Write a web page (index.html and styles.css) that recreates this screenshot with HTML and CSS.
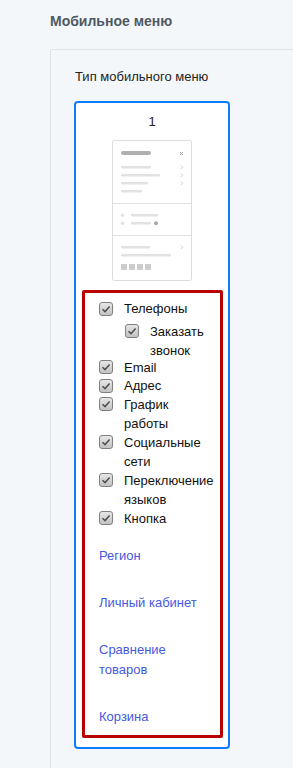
FILE: index.html
```html
<!DOCTYPE html>
<html>
<head>
    <title>Мобильное меню</title>
    <link rel="stylesheet" href="styles.css">
</head>
<body>
    <div class="page">
        <h2 class="section-title">Мобильное меню</h2>

        <div class="card">
            <div class="field-label">Тип мобильного меню</div>

            <div class="variant selected">
                <div class="variant-num">1</div>
                <svg class="preview" width="80" height="141" viewBox="0 0 80 141">
                    <rect x="0.5" y="0.5" width="79" height="140" rx="2" fill="#fff" stroke="#dcdcdc"/>
                    <!-- header -->
                    <rect x="9" y="11" width="30" height="4" rx="2" fill="#b0b0b0"/>
                    <path d="M68 12 L71 15 M71 12 L68 15" stroke="#9a9a9a" stroke-width="1"/>
                    <rect x="9" y="26" width="30" height="2.5" rx="1.2" fill="#e2e2e2"/>
                    <rect x="9" y="34" width="39" height="2.5" rx="1.2" fill="#e2e2e2"/>
                    <rect x="9" y="42" width="27" height="2.5" rx="1.2" fill="#e2e2e2"/>
                    <rect x="9" y="50" width="21" height="2.5" rx="1.2" fill="#e2e2e2"/>
                    <path d="M69 25.5 L70.5 27.2 L69 29 M69 33.5 L70.5 35.2 L69 37 M69 41.5 L70.5 43.2 L69 45" stroke="#cfcfcf" fill="none"/>
                    <line x1="1" y1="63.5" x2="79" y2="63.5" stroke="#e2e2e2"/>
                    <!-- contacts -->
                    <circle cx="10.5" cy="75.3" r="1.7" fill="#e2e2e2"/>
                    <rect x="19" y="74" width="27" height="2.5" rx="1.2" fill="#e2e2e2"/>
                    <circle cx="10.5" cy="83.3" r="1.7" fill="#e2e2e2"/>
                    <rect x="19" y="82" width="20" height="2.5" rx="1.2" fill="#e2e2e2"/>
                    <circle cx="44" cy="83.3" r="2" fill="#a8a8a8"/>
                    <line x1="1" y1="95.5" x2="79" y2="95.5" stroke="#e2e2e2"/>
                    <!-- footer -->
                    <rect x="9" y="106" width="29" height="2.5" rx="1.2" fill="#e2e2e2"/>
                    <path d="M69 105.5 L70.5 107.2 L69 109" stroke="#cfcfcf" fill="none"/>
                    <rect x="9" y="114" width="50" height="2.5" rx="1.2" fill="#e2e2e2"/>
                    <rect x="9" y="124" width="6" height="6" rx="0.5" fill="#cdcdcd"/>
                    <rect x="17" y="124" width="6" height="6" rx="0.5" fill="#cdcdcd"/>
                    <rect x="25" y="124" width="6" height="6" rx="0.5" fill="#cdcdcd"/>
                    <rect x="33" y="124" width="6" height="6" rx="0.5" fill="#cdcdcd"/>
                </svg>

                <div class="options">
                    <ul class="checks">
                        <li>
                            <span class="check"></span><span class="check-text">Телефоны</span>
                        </li>
                        <li class="nested">
                            <span class="check"></span><span class="check-text">Заказать звонок</span>
                        </li>
                        <li>
                            <span class="check"></span><span class="check-text">Email</span>
                        </li>
                        <li>
                            <span class="check"></span><span class="check-text">Адрес</span>
                        </li>
                        <li>
                            <span class="check"></span><span class="check-text">График работы</span>
                        </li>
                        <li>
                            <span class="check"></span><span class="check-text">Социальные сети</span>
                        </li>
                        <li>
                            <span class="check"></span><span class="check-text">Переключение языков</span>
                        </li>
                        <li>
                            <span class="check"></span><span class="check-text">Кнопка</span>
                        </li>
                    </ul>

                    <div class="links">
                        <a href="#">Регион</a>
                        <a href="#">Личный кабинет</a>
                        <a href="#">Сравнение товаров</a>
                        <a href="#">Корзина</a>
                    </div>
                </div>
            </div>
        </div>
    </div>
</body>
</html>
```

FILE: styles.css
```css
html, body {
    margin: 0;
    padding: 0;
    background: #f4f7f9;
}
.page {
    font-family: "Liberation Sans", Arial, sans-serif;
    padding: 13px 0 0 50px;
    width: 293px;
    height: 768px;
    box-sizing: border-box;
    overflow: hidden;
}
.section-title {
    margin: 0 0 20px;
    font-size: 14px;
    line-height: 16px;
    font-weight: bold;
    color: #4f5963;
}
.card {
    width: 300px;
    height: 760px;
    border: 1px solid #dfe4e8;
    border-radius: 2px;
    padding: 19px 0 0 23px;
    box-sizing: border-box;
}
.field-label {
    font-size: 13px;
    line-height: 15px;
    color: #222;
    padding-left: 1px;
    margin-bottom: 17px;
}
.variant {
    width: 156px;
    box-sizing: border-box;
    background: #fff;
    border: 2px solid #fff;
    border-radius: 4px;
    padding: 11px 0 9px;
    display: flex;
    flex-direction: column;
    align-items: center;
}
.variant.selected { border-color: #0f7bff; }
.variant-num {
    font-size: 13px;
    line-height: 15px;
    color: #222;
    margin-bottom: 11px;
}
.preview { display: block; }
.options {
    align-self: flex-start;
    margin: 9px 0 0 6px;
    width: 141px;
    box-sizing: border-box;
    border: 3px solid #b80000;
    border-radius: 2px;
    padding: 6px 6px 8px 14px;
}
.checks {
    list-style: none;
    margin: 0;
    padding: 0;
    width: 115px;
}
.checks li {
    display: flex;
    align-items: flex-start;
    font-size: 13px;
    line-height: 19.5px;
    color: #111;
    margin-bottom: -1px;
}
.checks li.nested {
    padding-left: 26px;
    margin: 4px 0 -3px;
}
.check {
    flex: none;
    width: 14px;
    height: 14px;
    margin: 2.5px 11px 0 0;
    box-sizing: border-box;
    border: 1px solid #808080;
    border-radius: 3px;
    background:
        url("data:image/svg+xml,%3Csvg xmlns='http://www.w3.org/2000/svg' width='12' height='12'%3E%3Cpath d='M2.5 6.2 L5 8.6 L9.6 3.4' fill='none' stroke='%23505050' stroke-width='1.5'/%3E%3C/svg%3E") center / 12px 12px no-repeat,
        linear-gradient(#e6e6e6, #c2c2c2);
}
.check-text { min-width: 0; }
.links {
    display: flex;
    flex-direction: column;
    gap: 27px;
    margin-top: 19px;
    width: 115px;
}
.links a {
    font-size: 13px;
    line-height: 20px;
    color: #4659e0;
    text-decoration: none;
}
```
